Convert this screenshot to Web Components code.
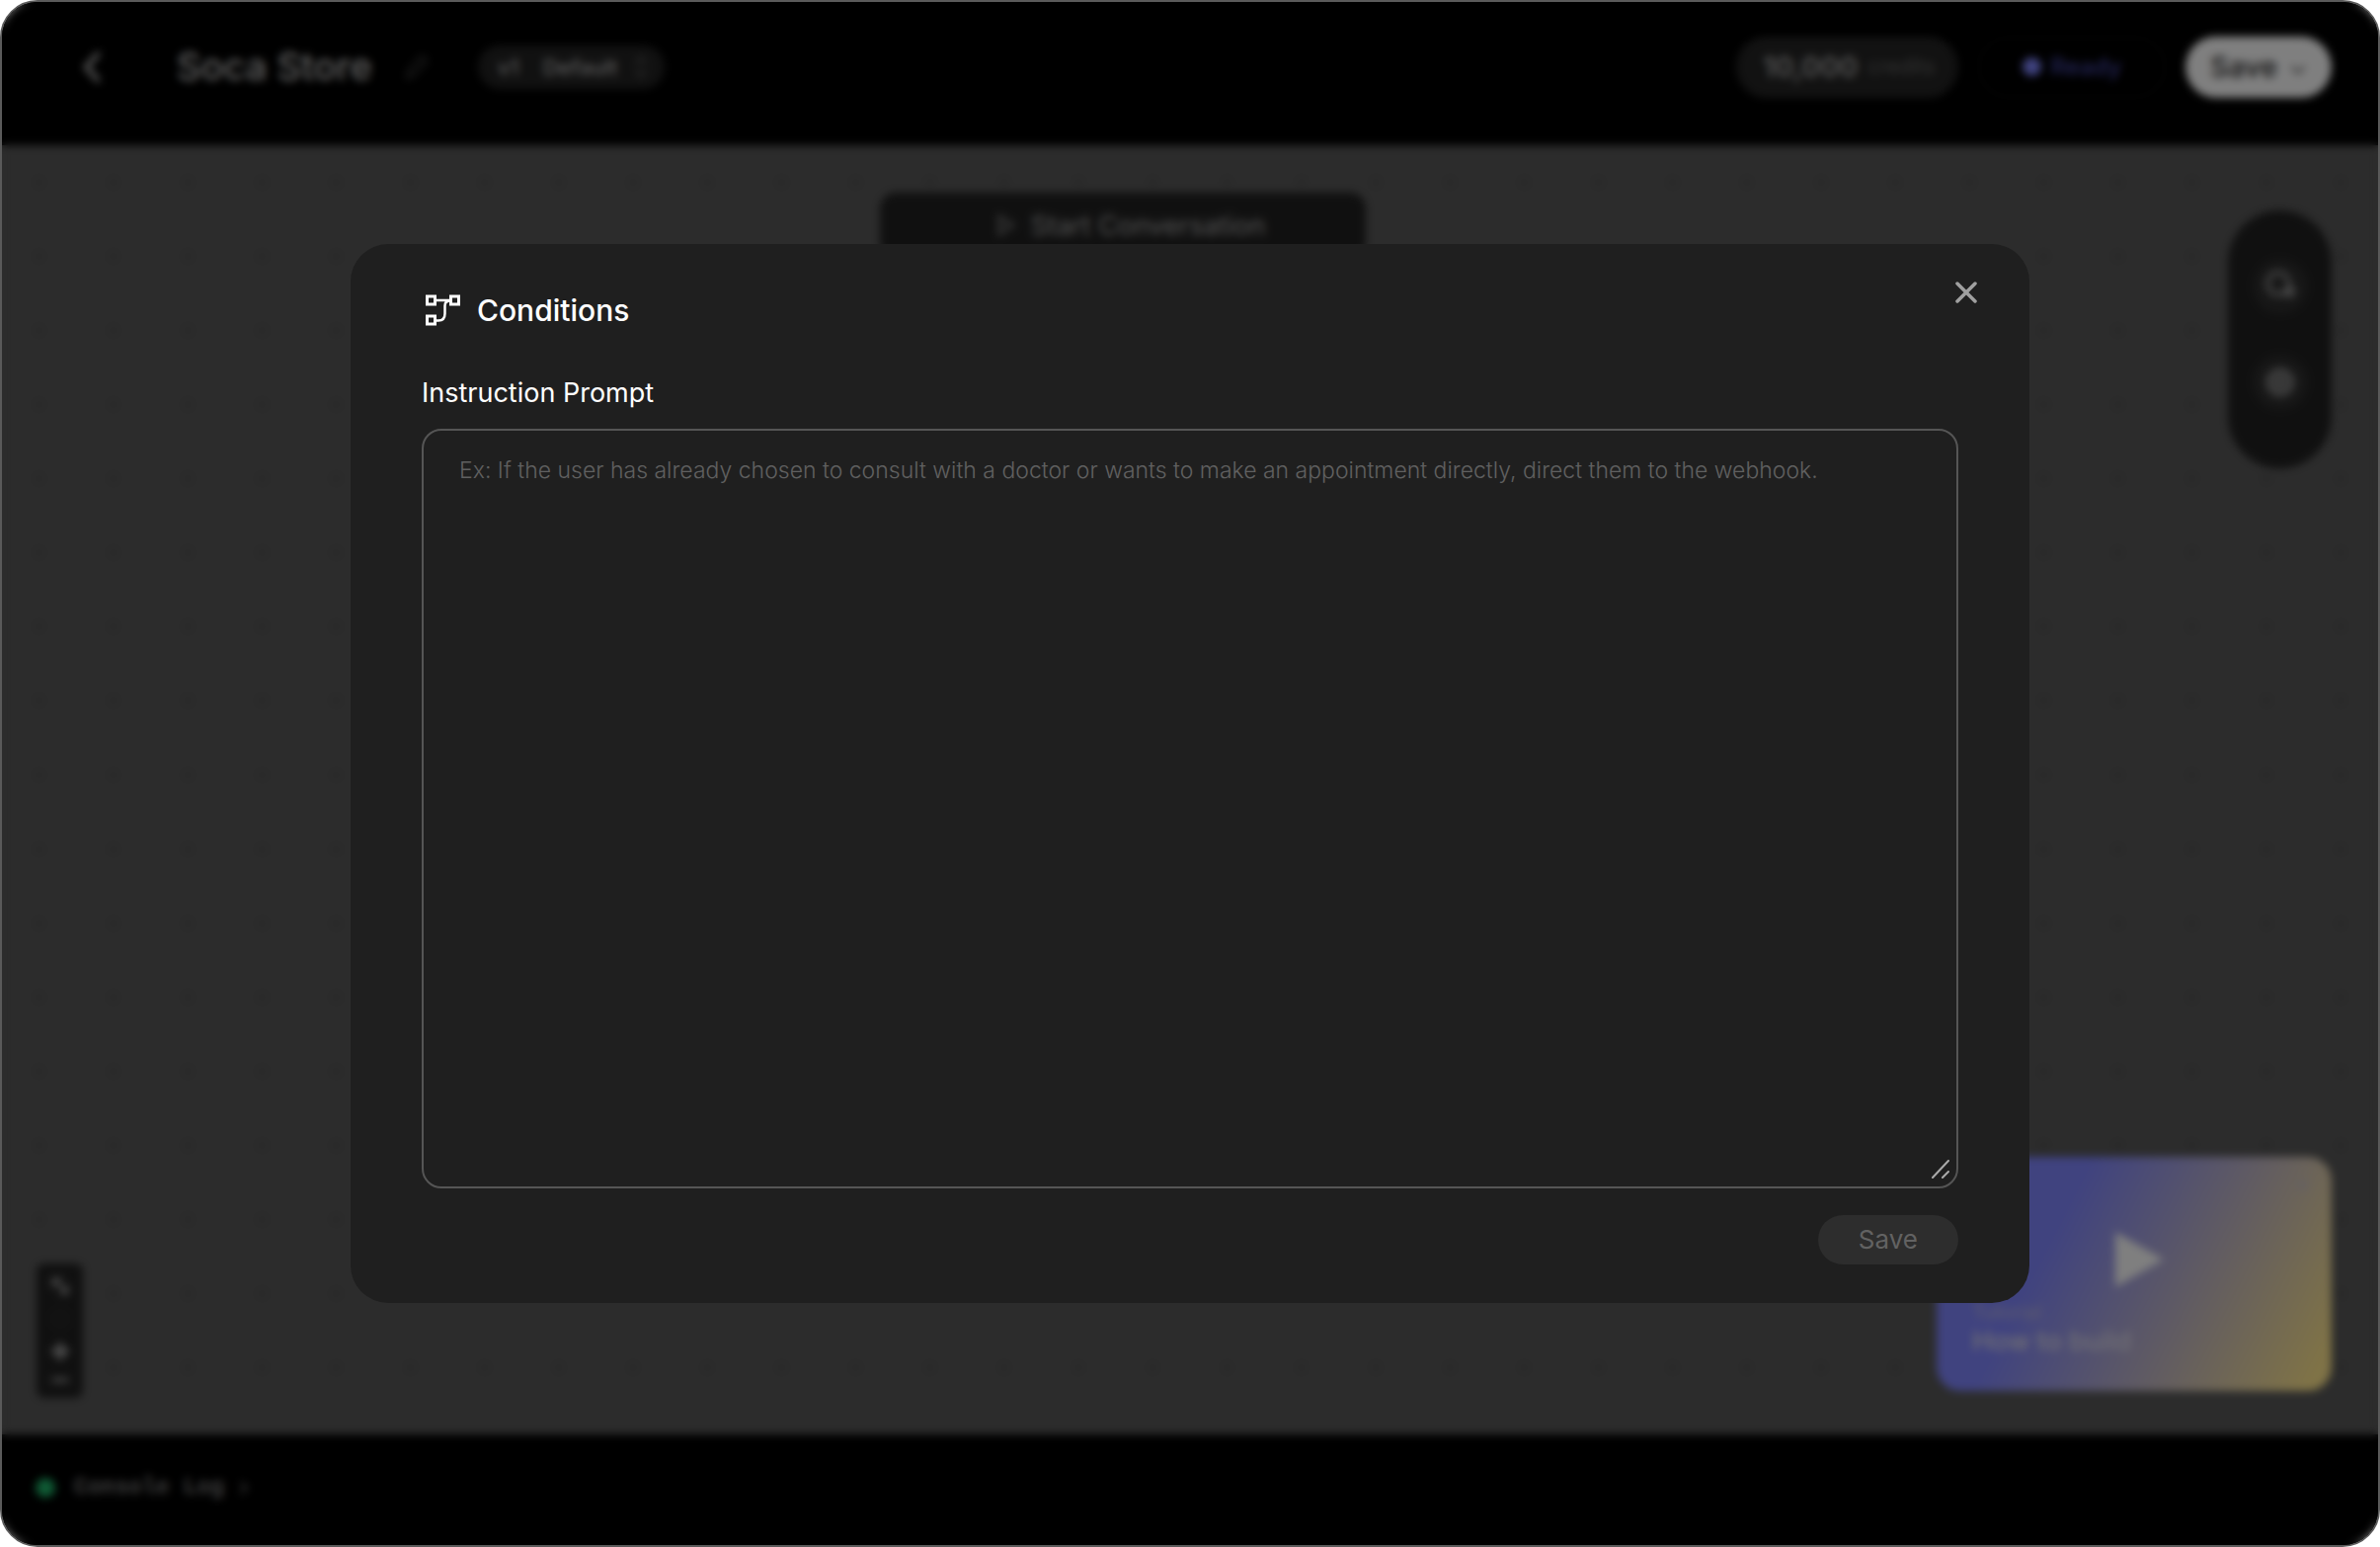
<!DOCTYPE html>
<html lang="en">
<head>
<meta charset="utf-8">
<title>Soca Store – Conditions</title>
<style>
html, body { margin: 0; height: 100%; background: #fff; }
body { font-family: Inter, "Liberation Sans", sans-serif; color: #fff; }
</style>
</head>
<body>
<app-shell>
  <top-bar slot="header" name="Soca Store" version="v1" label="Default" credits="10,000"></top-bar>
  <flow-canvas>
    <flow-node>Start Conversation</flow-node>
    <side-tools slot="tools"></side-tools>
    <zoom-controls slot="zoom"></zoom-controls>
    <video-card slot="video" kicker="Tutorial">How to build</video-card>
  </flow-canvas>
  <console-bar slot="footer">Console Log</console-bar>
  <modal-dialog slot="overlay" heading="Conditions">
    <prompt-field label="Instruction Prompt" placeholder="Ex: If the user has already chosen to consult with a doctor or wants to make an appointment directly, direct them to the webhook."></prompt-field>
    <pill-button slot="actions">Save</pill-button>
  </modal-dialog>
</app-shell>

<script>
const base = `<style>
*, *::before { box-sizing: border-box; }
button { font: inherit; color: inherit; background: none; border: 0; padding: 0; margin: 0; }
svg { display: block; fill: none; stroke: currentColor; stroke-linecap: round; stroke-linejoin: round; }
</style>`;

function define(tag, render) {
  customElements.define(tag, class extends HTMLElement {
    constructor() {
      super();
      this.attachShadow({ mode: 'open' });
    }
    connectedCallback() {
      this.shadowRoot.innerHTML = base + render(name => this.getAttribute(name) || '');
    }
  });
}

define('app-shell', () => `<style>
:host { display: flex; flex-direction: column; position: relative; box-sizing: border-box; min-height: 100vh;
  border: 2px solid #5a5a5a; border-radius: 38px; overflow: hidden; background: #000; }
main { display: flex; flex: 1; }
</style>
<slot name="header"></slot><main><slot></slot></main><slot name="footer"></slot><slot name="overlay"></slot>`);

define('top-bar', a => `<style>
:host { display: block; background: #000; color: #fff; }
header { display: flex; align-items: center; height: 145px; padding: 0 47px 14px 76px; }
.back { color: #aaa; }
h1 { margin: 0 0 2px 71px; font-size: 38px; line-height: 44px; font-weight: 500; color: #c4c4c4; }
.edit { margin-left: 32px; color: #333; }
.version { display: flex; align-items: center; height: 44px; margin-left: 49px; padding: 0 16px 0 20px; border-radius: 22px;
  background: #222; font-size: 22px; font-weight: 500; color: #b4b4b4; }
.version span { margin-right: 24px; }
.version span + span { margin-right: 15px; }
.right { display: flex; align-items: center; gap: 20px; margin-left: auto; font-size: 26px; }
.pill { display: flex; align-items: center; justify-content: center; height: 62px; border-radius: 31px; }
.credits { gap: 10px; padding: 0 24px 0 27px; background: #242424; font-size: 29px; font-weight: 600; color: #a6a6a6; }
.credits small { font-size: 21px; font-weight: 400; color: #666; }
.ready { gap: 10px; width: 190px; border: 2px solid #0a0a0a; font-size: 24px; font-weight: 500; color: #4b4db4; }
.ready::before { content: ""; width: 19px; height: 19px; border-radius: 50%; background: #8086ff; }
.save { gap: 12px; width: 148px; background: #fff; color: #222; font-weight: 500; font-size: 29px; }
</style>
<header>
  <button class="back" aria-label="Back"><svg width="30" height="36" viewBox="0 0 30 36" stroke-width="5"><path d="M21 5 9 18l12 13"/></svg></button>
  <h1>${a('name')}</h1>
  <button class="edit" aria-label="Rename"><svg width="26" height="30" viewBox="0 0 26 30" stroke-width="3"><path d="m3 26 2-8L18 4l5 5L10 23z"/></svg></button>
  <button class="version"><span>${a('version')}</span><span>${a('label')}</span><svg width="16" height="24" viewBox="0 0 16 24" stroke-width="2" color="#666"><path d="m3 8 5-5 5 5M3 16l5 5 5-5"/></svg></button>
  <div class="right">
    <div class="pill credits">${a('credits')} <small>credits</small></div>
    <div class="pill ready">Ready</div>
    <button class="pill save">Save<svg width="18" height="16" viewBox="0 0 18 16" stroke-width="2" color="#444"><path d="m3 8 6 6 6-6"/></svg></button>
  </div>
</header>`);

define('flow-canvas', () => `<style>
:host { display: block; flex: 1; position: relative; background: #585858 radial-gradient(circle, #4c4c4c 3px, transparent 4px) 0 0 / 75px 75px round repeat; }
.node { display: flex; justify-content: center; padding: 48px 136px 0 0; }
.tools { position: absolute; right: 47px; top: 66px; }
.zoom { position: absolute; left: 35px; bottom: 37px; }
.video { position: absolute; right: 47px; bottom: 44px; }
</style>
<div class="node"><slot></slot></div>
<div class="tools"><slot name="tools"></slot></div>
<div class="zoom"><slot name="zoom"></slot></div>
<div class="video"><slot name="video"></slot></div>`);

define('flow-node', () => `<style>
:host { display: flex; align-items: center; justify-content: center; gap: 15px; box-sizing: border-box; width: 492px; height: 66px; padding-left: 16px;
  border-radius: 16px; background: #212121; color: #a8a8a8; font-size: 27px; font-weight: 400; }
svg { color: #777; }
</style>
<svg width="20" height="24" viewBox="0 0 20 24" stroke-width="3"><path d="M3 3v18l14-9z"/></svg><span><slot></slot></span>`);

define('side-tools', () => `<style>
:host { display: flex; flex-direction: column; align-items: center; gap: 41px; box-sizing: border-box; width: 105px; height: 261px; padding-top: 49px;
  border-radius: 53px; background: #212121; color: #8c8c8c; }
button { display: grid; place-items: center; width: 56px; height: 56px; border-radius: 50%; background: #2e2e2e; }
</style>
<button aria-label="Chat"><svg width="38" height="38" viewBox="0 0 38 38" stroke-width="4"><circle cx="17" cy="16" r="11"/><path d="M22 27c0-5 2-8 8-9 5 4 4 8 2 11H25z" fill="currentColor" stroke-width="1"/></svg></button>
<button aria-label="Settings"><svg width="36" height="36" viewBox="0 0 36 36" stroke-width="5"><circle cx="18" cy="18" r="12" stroke-dasharray="7 3"/><circle cx="18" cy="18" r="5"/></svg></button>`);

define('zoom-controls', () => `<style>
:host { display: flex; flex-direction: column; align-items: center; gap: 9px; box-sizing: border-box; width: 47px; height: 136px;
  padding-top: 11px; border-radius: 8px; background: #212121; color: #999; }
</style>
<button aria-label="Fit view"><svg width="24" height="24" viewBox="0 0 24 24" stroke-width="3"><path d="M5 12V5h8M6 6l12 12M19 12v7h-6"/></svg></button>
<button aria-label="Undo"><svg width="24" height="24" viewBox="0 0 24 24" stroke-width="2" color="#333"><circle cx="12" cy="12" r="8"/></svg></button>
<button aria-label="Zoom in"><svg width="24" height="24" viewBox="0 0 24 24" stroke-width="6"><path d="M6 12h12M12 6v12"/></svg></button>
<button aria-label="Zoom out"><svg width="24" height="16" viewBox="0 0 24 16" stroke-width="4"><path d="M5 8h14"/></svg></button>`);

define('video-card', a => `<style>
:host { display: flex; flex-direction: column; justify-content: flex-end; position: relative; box-sizing: border-box; width: 400px; height: 237px;
  padding: 0 36px 33px; border-radius: 24px; background: linear-gradient(117deg, #8086ff 30%, #ffe68e 95%); }
small { font-size: 20px; line-height: 26px; color: #bcb8dc; }
b { font-size: 27px; line-height: 34px; font-weight: 500; color: #e0deea; }
.play { position: absolute; left: 181px; top: 76px; color: #fff; }
.close { position: absolute; right: 22px; top: 22px; color: #c8c0c8; }
</style>
<button class="play" aria-label="Play"><svg width="49" height="56" viewBox="0 0 49 56"><path fill="currentColor" stroke="none" d="M0 0v56l49-28z"/></svg></button>
<button class="close" aria-label="Dismiss"><svg width="14" height="14" viewBox="0 0 14 14" stroke-width="3"><path d="m3 3 8 8M11 3l-8 8"/></svg></button>
<small>${a('kicker')}</small><b><slot></slot></b>`);

define('console-bar', () => `<style>
:host { display: block; background: #000; }
button { display: flex; align-items: center; height: 112px; padding: 0 0 4px 34px; color: #7c7c7c;
  font: 700 23px/28px "Liberation Mono", monospace; }
i { width: 20px; height: 20px; margin-right: 19px; border-radius: 50%; background: #1fb469; }
svg { margin-left: 14px; }
</style>
<button><i></i><span><slot></slot></span><svg width="12" height="18" viewBox="0 0 12 18" stroke-width="2"><path d="m3 4 6 5-6 5"/></svg></button>`);

define('modal-dialog', a => `<style>
:host { display: grid; place-items: center; position: absolute; inset: 0; background: rgba(0,0,0,.5); border-radius: 36px;
  backdrop-filter: blur(4px); }
section { position: relative; box-sizing: border-box; width: min(1700px, 92%); padding: 39px 72px; border-radius: 38px; background: #1f1f1f; color: #fff; }
h2 { display: flex; align-items: center; gap: 17px; margin: 0 0 40px; padding-left: 4px; font-size: 30px; line-height: 56px; font-weight: 500; }
.close { position: absolute; right: 44px; top: 29px; width: 40px; height: 40px; display: grid; place-items: center; color: #a0a0a0; }
footer { display: flex; justify-content: flex-end; margin-top: 27px; }
</style>
<section role="dialog" aria-modal="true" aria-labelledby="title">
  <h2 id="title"><svg width="35" height="32" viewBox="0 0 35 32" stroke-width="3" style="stroke-linecap:butt;stroke-linejoin:miter"><rect x="1.5" y="2" width="8" height="8"/><rect x="25.5" y="2" width="8" height="8"/><rect x="1.5" y="22" width="8" height="8"/><path stroke-width="2.5" d="M10 6h15M25 6.500c-4 0-5.500 1.500-5.500 5v8c0 5-2 7-6.500 7h-3"/></svg>${a('heading')}</h2>
  <button class="close" aria-label="Close"><svg width="22" height="22" viewBox="0 0 22 22" stroke-width="3.500"><path d="m2 2 18 18M20 2 2 20"/></svg></button>
  <slot></slot>
  <footer><slot name="actions"></slot></footer>
</section>`);

define('prompt-field', a => `<style>
:host { display: block; }
label { display: block; margin-bottom: 20px; font-size: 27px; line-height: 32px; font-weight: 400; }
.box { display: flex; position: relative; }
textarea { width: 100%; height: 769px; padding: 24px 36px; border: 2px solid #555; border-radius: 20px; background: transparent; color: #fff;
  font: 300 23px/32px Inter, "Liberation Sans", sans-serif; resize: none; outline: 0; }
textarea::placeholder { color: #606060; opacity: 1; }
.grip { position: absolute; right: 9px; bottom: 10px; color: #aaa; }
</style>
<label for="prompt">${a('label')}</label>
<div class="box"><textarea id="prompt" placeholder="${a('placeholder')}"></textarea>
<svg class="grip" width="18" height="19" viewBox="0 0 18 19" stroke-width="2"><path d="M1 18 17 1M11 18l6-6"/></svg></div>`);

define('pill-button', () => `<style>
:host { display: block; }
button { height: 50px; padding: 0 41px; border-radius: 25px; background: #2d2d2d; color: #626262; font-size: 26px; line-height: 50px; }
</style><button disabled><slot></slot></button>`);
</script>
</body>
</html>
